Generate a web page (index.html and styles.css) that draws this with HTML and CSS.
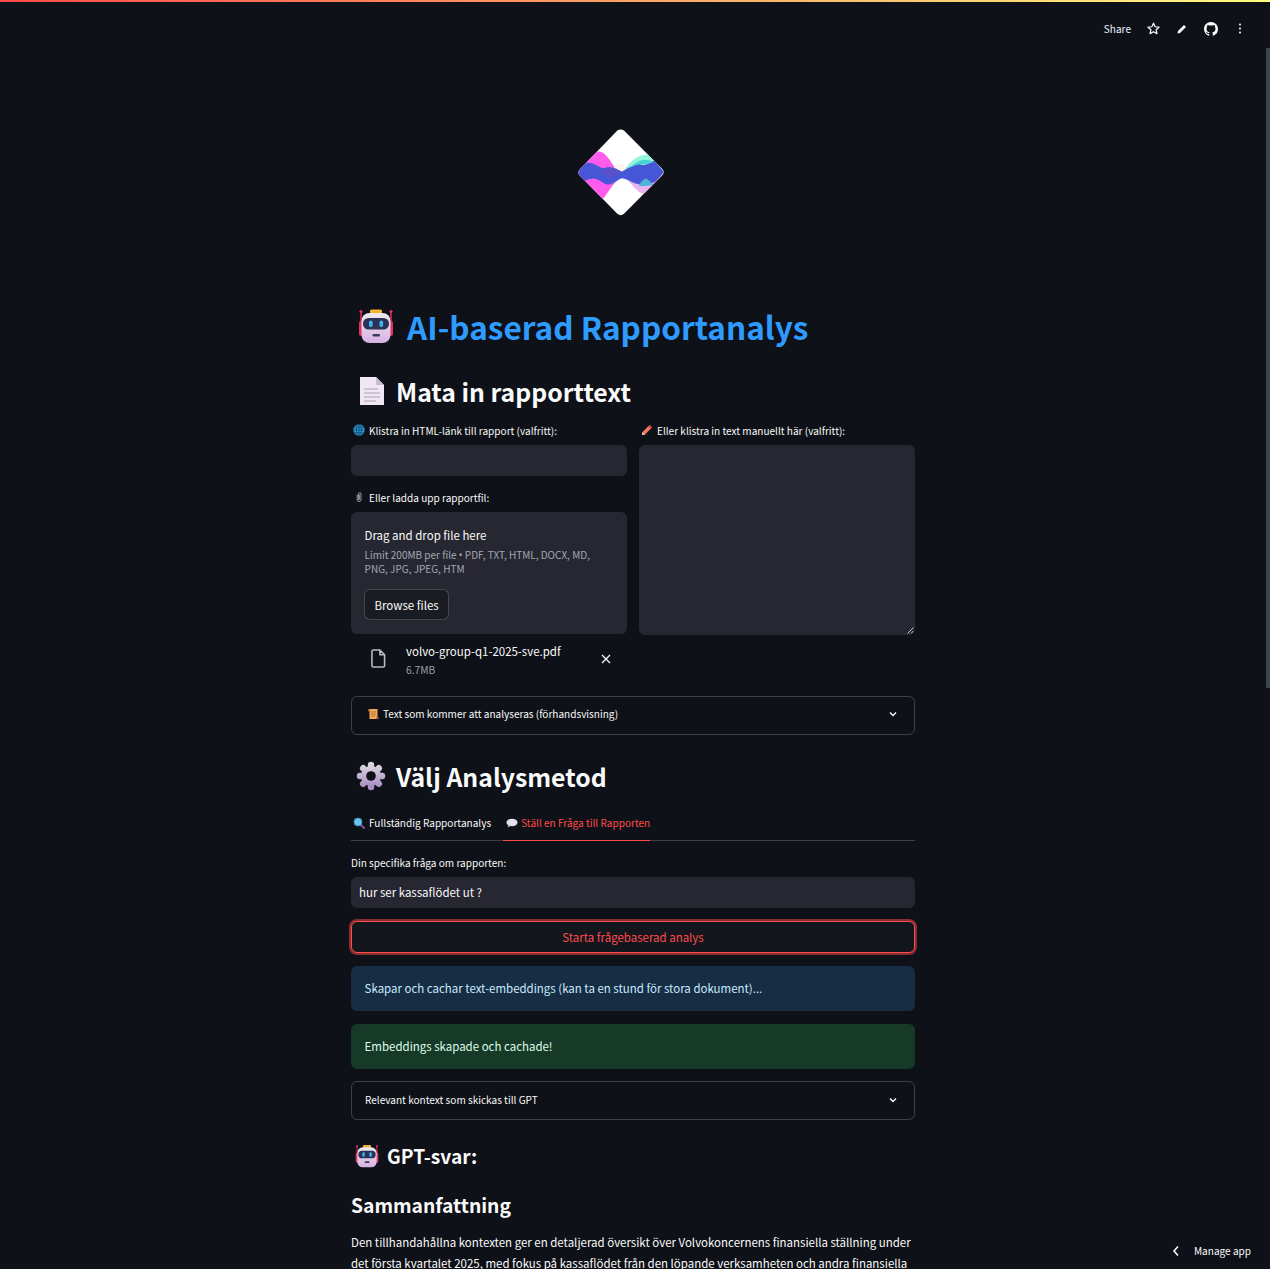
FILE: index.html
```html
<!DOCTYPE html>
<html lang="sv">
<head>
<meta charset="utf-8">
<title>AI-baserad Rapportanalys</title>
<link rel="stylesheet" href="styles.css">
</head>
<body>
<svg class="defs" width="0" height="0" aria-hidden="true">
  <defs>
    <linearGradient id="botFace" x1="0" y1="0" x2="0" y2="1"><stop offset="0" stop-color="#f0ebee"/><stop offset="1" stop-color="#d6b0e4"/></linearGradient>
    <linearGradient id="gearFill" x1="0" y1="0" x2="0" y2="1"><stop offset="0" stop-color="#d9d3dd"/><stop offset="1" stop-color="#a98fc4"/></linearGradient>
    <symbol id="i-robot" viewBox="0 0 36 36">
      <path d="M3 5v16M33 5v16" stroke="#e0325f" stroke-width="1.4"/>
      <circle cx="3" cy="3.500" r="1.600" fill="#f0306a"/><circle cx="33" cy="3.500" r="1.600" fill="#f0306a"/>
      <rect x="1" y="13" width="4" height="15" rx="2" fill="#e0325f"/><rect x="31" y="13" width="4" height="15" rx="2" fill="#e0325f"/>
      <rect x="12" y="1.500" width="12" height="4" rx="1.500" fill="#f2b632"/>
      <rect x="3.500" y="5" width="29" height="30" rx="8" fill="url(#botFace)"/>
      <rect x="5" y="10" width="26" height="11.500" rx="5.500" fill="#2c3357"/>
      <rect x="11" y="12.500" width="3.600" height="6.500" rx="1.800" fill="#3fb6f2"/><rect x="21.500" y="12.500" width="3.600" height="6.500" rx="1.800" fill="#3fb6f2"/>
      <rect x="14.500" y="26" width="7.500" height="2.400" rx="1.200" fill="#3c3a55"/>
    </symbol>
    <symbol id="i-doc" viewBox="0 0 26 30">
      <path d="M1 1h16l8 8v20H1z" fill="#efe7f3"/>
      <path d="M17 1l8 8h-8z" fill="#c8bdd0"/>
      <path d="M5 13h14M5 17h16M5 21h16M5 25h12" stroke="#a9a4b0" stroke-width="1"/>
    </symbol>
    <symbol id="i-globe" viewBox="0 0 12 12">
      <circle cx="6" cy="6" r="5.700" fill="#2f9bd6"/>
      <g fill="none" stroke="#0f3f66" stroke-width=".7"><ellipse cx="6" cy="6" rx="2.600" ry="5.500"/><path d="M.5 6h11M1.300 3.300h9.400M1.300 8.700h9.400M6 .5v11"/></g>
    </symbol>
    <symbol id="i-clip" viewBox="0 0 10 12">
      <path d="M3.200 3.500v5.200a1.900 1.900 0 0 0 3.800 0V2.900a1.300 1.300 0 0 0-2.600 0v5.400a.6.600 0 0 0 1.200 0V3.600" fill="none" stroke="#a6a6ac" stroke-width=".9"/>
    </symbol>
    <symbol id="i-pencil" viewBox="0 0 12 12">
      <path d="M8.500 1l2.500 2.500-7 7L1 11l.5-3z" fill="#f0795a"/>
      <path d="M8.500 1l2.500 2.500-1.200 1.200-2.500-2.500z" fill="#e8384f"/>
      <path d="M1.500 8L1 11l3-.5z" fill="#f5d4b0"/>
    </symbol>
    <symbol id="i-scroll" viewBox="0 0 12 12">
      <rect x="2.500" y="1" width="8" height="10" fill="#f2a65a"/>
      <path d="M1 1.200h2v2H1zM9 9h2.500v2H9z" fill="#b9702f"/>
      <path d="M4 4h5M4 6h5M4 8h4" stroke="#a85f25" stroke-width=".7"/>
    </symbol>
    <symbol id="i-gear" viewBox="0 0 30 30">
      <path d="M15 4v22M4 15h22M7.200 7.200l15.600 15.600M22.800 7.200L7.200 22.800" stroke="url(#gearFill)" stroke-width="6.500" stroke-linecap="round"/>
      <circle cx="15" cy="15" r="10" fill="url(#gearFill)"/>
      <circle cx="15" cy="15" r="4.800" fill="#0e1117"/>
    </symbol>
    <symbol id="i-search" viewBox="0 0 12 12">
      <path d="M7.500 7.500l3.500 3.500" stroke="#7b4fa5" stroke-width="2" stroke-linecap="round"/>
      <circle cx="5" cy="5" r="4" fill="#6cc4ee" stroke="#3f8fc4" stroke-width=".8"/>
    </symbol>
    <symbol id="i-speech" viewBox="0 0 12 12">
      <ellipse cx="6" cy="5.500" rx="5.500" ry="3.800" fill="#e6dfec"/>
      <path d="M2.500 7.500L1.500 10.500 5 8.800z" fill="#cdbfd8"/>
    </symbol>
    <symbol id="i-chev" viewBox="0 0 12 12">
      <path d="M3 4.500L6 7.500 9 4.500" fill="none" stroke="#fafafa" stroke-width="1.400"/>
    </symbol>
  </defs>
</svg>

<div class="page">
  <div class="topbar"></div>

  <header class="toolbar">
    <span class="share">Share</span>
    <svg class="tool tool-star" viewBox="0 0 24 24"><path d="M12 3.500l2.600 5.700 6.200.7-4.600 4.200 1.300 6.100L12 17.200l-5.500 3 1.300-6.100-4.600-4.200 6.200-.7z" fill="none" stroke="#fafafa" stroke-width="2" stroke-linejoin="round"/></svg>
    <svg class="tool tool-pen" viewBox="0 0 24 24"><path d="M3 21l1-5L16 4l4 4L8 20z" fill="#fafafa"/></svg>
    <svg class="tool tool-gh" viewBox="0 0 16 16"><path d="M8 0C3.580 0 0 3.580 0 8c0 3.540 2.290 6.530 5.470 7.590.4.070.55-.17.55-.38 0-.19-.01-.82-.01-1.490-2.010.37-2.530-.49-2.690-.94-.09-.23-.48-.94-.82-1.130-.28-.15-.68-.52-.01-.53.630-.01 1.080.58 1.230.82.720 1.210 1.870.87 2.330.66.070-.52.280-.87.510-1.070-1.780-.2-3.640-.89-3.640-3.950 0-.87.310-1.590.82-2.150-.08-.2-.36-1.020.08-2.120 0 0 .67-.21 2.200.82.640-.18 1.320-.27 2-.27s1.360.09 2 .27c1.530-1.040 2.200-.82 2.200-.82.440 1.100.16 1.920.08 2.120.51.560.82 1.270.82 2.150 0 3.070-1.870 3.750-3.650 3.950.29.250.54.730.54 1.480 0 1.070-.01 1.930-.01 2.200 0 .21.150.46.550.38A8.010 8.010 0 0 0 16 8c0-4.420-3.580-8-8-8z" fill="#fafafa"/></svg>
    <svg class="tool tool-more" viewBox="0 0 4 14"><circle cx="2" cy="2" r="1.300" fill="#fafafa"/><circle cx="2" cy="7" r="1.300" fill="#fafafa"/><circle cx="2" cy="12" r="1.300" fill="#fafafa"/></svg>
  </header>

  <main class="main">
    <div class="logo-wrap">
      <svg class="logo" viewBox="114 88 258 260" role="img" aria-label="Logotyp">
        <defs>
          <clipPath id="dia"><path d="M232 92q10-6 20 0L366 207q10 10 0 20L252 342q-10 8-20 0L120 228q-10-10 0-20z"/></clipPath>
        </defs>
        <path d="M232 92q10-6 20 0L366 207q10 10 0 20L252 342q-10 8-20 0L120 228q-10-10 0-20z" fill="#fff"/>
        <g clip-path="url(#dia)">
          <path d="M100 205C130 180 150 155 175 155C205 155 215 205 245 218L245 232C225 240 210 270 190 296C160 285 130 255 100 235z" fill="#ff5cee"/>
          <path d="M250 212C275 180 295 165 320 165C340 170 360 195 380 215L300 225z" fill="#93f5dc"/>
          <path d="M262 240C285 265 300 285 315 282C335 270 350 250 372 225L300 225z" fill="#e9b4ee"/>
          <path d="M222 200a22 22 0 0 1 36 3l-10 20-22 0z" fill="#fdf3ee"/>
          <path d="M114 217L135 190C165 184 180 210 195 204C215 197 230 208 245 215C265 208 280 191 300 193C320 203 335 181 345 183L372 217L345 247C325 252 310 256 290 252C275 248 258 235 245 235C225 244 215 256 200 254C185 249 175 236 160 236C140 239 130 244 125 249z" fill="#4656d6"/>
          <path d="M295 258C305 245 312 235 320 237C328 242 335 250 340 254C325 258 310 260 295 258z" fill="#4bb5da"/>
          <path d="M268 206C280 194 295 182 312 180C325 180 335 184 340 188C325 190 315 195 300 194C288 194 278 200 268 206z" fill="#47d3d5"/>
          <path d="M178 218C192 213 200 203 215 205C225 207 235 213 245 218C232 222 225 232 212 236C202 228 190 222 178 218z" fill="#5a50c8"/>
        </g>
      </svg>
    </div>

    <h1 class="title"><svg class="emoji-title"><use href="#i-robot"/></svg><span>AI-baserad Rapportanalys</span></h1>

    <h2 class="heading heading-input"><svg class="emoji-doc"><use href="#i-doc"/></svg><span>Mata in rapporttext</span></h2>

    <section class="columns">
      <div class="col">
        <label class="label"><svg class="emoji"><use href="#i-globe"/></svg>Klistra in HTML-länk till rapport (valfritt):</label>
        <div class="input"></div>
        <label class="label label-upload"><svg class="emoji"><use href="#i-clip"/></svg>Eller ladda upp rapportfil:</label>
        <div class="dropzone">
          <div class="drop-title">Drag and drop file here</div>
          <div class="drop-hint">Limit 200MB per file <span class="bullet">•</span> PDF, TXT, HTML, DOCX, MD, PNG, JPG, JPEG, HTM</div>
          <button class="browse" type="button">Browse files</button>
        </div>
        <div class="file">
          <svg class="file-icon" viewBox="0 0 16 20"><path d="M2.500 1h7l5 5v11.500a1.500 1.500 0 0 1-1.500 1.500H2.500A1.500 1.500 0 0 1 1 17.500v-15A1.500 1.500 0 0 1 2.500 1zM9.500 1v5h5" fill="none" stroke="#b9bac1" stroke-width="1.700" stroke-linejoin="round"/></svg>
          <div class="file-meta">
            <div class="file-name">volvo-group-q1-2025-sve.pdf</div>
            <div class="file-size">6.7MB</div>
          </div>
          <svg class="file-x" viewBox="0 0 10 10"><path d="M1 1l8 8M9 1L1 9" stroke="#fafafa" stroke-width="1.300"/></svg>
        </div>
      </div>
      <div class="col">
        <label class="label"><svg class="emoji"><use href="#i-pencil"/></svg>Eller klistra in text manuellt här (valfritt):</label>
        <div class="textarea">
          <svg class="grip" viewBox="0 0 8 8"><path d="M7.500 1.500l-6 6M7.500 5l-2.500 2.500" stroke="#c9c9cf" stroke-width="1"/></svg>
        </div>
      </div>
    </section>

    <div class="expander expander-preview">
      <span class="exp-label"><svg class="emoji"><use href="#i-scroll"/></svg>Text som kommer att analyseras (förhandsvisning)</span>
      <svg class="chev"><use href="#i-chev"/></svg>
    </div>

    <h2 class="heading heading-method"><svg class="emoji-gear"><use href="#i-gear"/></svg><span>Välj Analysmetod</span></h2>

    <nav class="tabs">
      <span class="tab"><svg class="emoji"><use href="#i-search"/></svg>Fullständig Rapportanalys</span>
      <span class="tab tab-active"><svg class="emoji"><use href="#i-speech"/></svg>Ställ en Fråga till Rapporten</span>
    </nav>

    <label class="label label-q">Din specifika fråga om rapporten:</label>
    <div class="input input-q">hur ser kassaflödet ut ?</div>
    <button class="primary" type="button">Starta frågebaserad analys</button>
    <div class="alert alert-info">Skapar och cachar text-embeddings (kan ta en stund för stora dokument)...</div>
    <div class="alert alert-ok">Embeddings skapade och cachade!</div>
    <div class="expander expander-ctx">
      <span class="exp-label">Relevant kontext som skickas till GPT</span>
      <svg class="chev"><use href="#i-chev"/></svg>
    </div>

    <h3 class="answer-head"><svg class="emoji-bot-s"><use href="#i-robot"/></svg><span>GPT-svar:</span></h3>
    <h3 class="answer-sub">Sammanfattning</h3>
    <p class="para">Den tillhandahållna kontexten ger en detaljerad översikt över Volvokoncernens finansiella ställning under det första kvartalet 2025, med fokus på kassaflödet från den löpande verksamheten och andra finansiella</p>
  </main>

  <div class="manage">
    <svg class="manage-chev" viewBox="0 0 8 12"><path d="M6 1.500L2 6l4 4.500" fill="none" stroke="#fafafa" stroke-width="1.600"/></svg>
    <span>Manage app</span>
  </div>
  <div class="scrollthumb"></div>
</div>
</body>
</html>
```

FILE: styles.css
```css
* { box-sizing: border-box; }
html, body { margin: 0; padding: 0; height: 100%; overflow: hidden; background: #0e1117; }
body { font-family: "Noto Sans CJK SC", "Noto Sans", sans-serif; color: #fafafa; font-size: 11.48px; }
.defs { position: absolute; }

.page { position: relative; height: 1269px; overflow: hidden; }
.topbar { height: 2px; background: linear-gradient(90deg, #ff4b4b, #fffd80); }

.toolbar { height: 46px; display: flex; align-items: center; justify-content: flex-end; padding: 7px 28px 0 0; }
.share { font-size: 10.1px; margin-right: 15px; color: #e8f4ff; }
.tool { display: block; flex: none; }
.tool-star { width: 15px; height: 15px; margin-right: 15px; }
.tool-pen { width: 12px; height: 12px; margin-right: 16px; }
.tool-gh { width: 14px; height: 14px; margin-right: 20px; }
.tool-more { width: 4px; height: 11px; }

.main { width: 564px; margin-left: 351px; display: flex; flex-direction: column; }

.logo-wrap { display: flex; justify-content: center; padding: 81px 24px 0 0; }
.logo { width: 86px; height: 87px; display: block; }

h1, h2, h3, p { margin: 0; }
.title { display: flex; align-items: center; margin-top: 90px; height: 40px; font-size: 31.55px; font-weight: 700; color: #2f9bff; white-space: nowrap; padding-left: 7px; }
.emoji-title { width: 36px; height: 36px; margin-right: 13px; flex: none; }

.heading { display: flex; align-items: center; font-size: 24.8px; font-weight: 600; white-space: nowrap; }
.heading-input { margin-top: 29px; height: 32px; padding-left: 8px; }
.emoji-doc { width: 26px; height: 30px; margin-right: 11px; flex: none; }
.heading-method { margin-top: 24px; height: 34px; padding-left: 5px; }
.emoji-gear { width: 30px; height: 30px; margin-right: 10px; flex: none; }

.columns { display: grid; grid-template-columns: 276px 276px; column-gap: 12px; margin-top: 16px; }
.col { display: flex; flex-direction: column; min-width: 0; }

.label { display: flex; align-items: center; height: 16px; padding-bottom: 2px; font-size: 10.05px; white-space: nowrap; }
.emoji { width: 12px; height: 12px; margin: 0 4px 0 2px; flex: none; }

.input { height: 31px; margin-top: 6px; background: #262730; border-radius: 6px; padding: 0 8px 1px; display: flex; align-items: center; font-size: 11.48px; }
.label-upload { margin-top: 14px; }
.dropzone { margin-top: 6px; height: 122px; background: #262730; border-radius: 6px; padding: 13px 13px 0 13.6px; display: flex; flex-direction: column; align-items: flex-start; }
.drop-title { font-size: 11.48px; line-height: 20px; }
.drop-hint { margin-top: 3px; font-size: 10px; line-height: 14px; color: #a3a8b4; }
.bullet { font-family: "Noto Sans", sans-serif; }
.browse { margin: 13px 0 0 -.6px; height: 31px; padding: 0 9.5px; background: #1a1c24; border: 1px solid rgba(250,250,250,.2); border-radius: 6px; color: #fafafa; font: inherit; font-size: 11.48px; }

.file { display: flex; align-items: flex-start; height: 50px; padding: 7px 0 0 20px; }
.file-icon { width: 15px; height: 19px; margin: 8px 20px 0 0; flex: none; }
.file-meta { width: 195px; flex: none; }
.file-name { font-size: 11.48px; line-height: 20px; }
.file-size { font-size: 10.2px; line-height: 18px; color: #9b9ea6; }
.file-x { width: 10px; height: 10px; margin-top: 13px; flex: none; }

.textarea { position: relative; margin-top: 6px; height: 190px; background: #262730; border-radius: 6px; }
.grip { position: absolute; right: 1px; bottom: 1px; width: 8px; height: 8px; }

.expander { display: flex; align-items: center; justify-content: space-between; height: 39px; border: 1px solid rgba(250,250,250,.2); border-radius: 6px; padding: 0 15px 2px 13px; }
.expander-preview { margin-top: 12px; padding-bottom: 4px; }
.expander-ctx { margin-top: 12px; }
.exp-label { display: flex; align-items: center; font-size: 10.05px; white-space: nowrap; }
.chev { width: 12px; height: 12px; flex: none; }

.tabs { display: flex; margin-top: 13px; height: 35px; border-bottom: 1px solid rgba(250,250,250,.2); gap: 12px; padding-top: 6px; }
.tab { display: flex; align-items: flex-start; padding-top: 3px; font-size: 10.05px; white-space: nowrap; height: 29px; }
.tab .emoji { margin-top: 2px; }
.tab-active { color: #ff4b4b; border-bottom: 1px solid #ff4b4b; height: 29px; }
.tab-active .emoji { margin: 2px 3px 0 3px; }

.label-q { margin-top: 14px; }
.input-q { margin-top: 6px; }

.primary { margin-top: 13px; height: 32px; width: 100%; background: #13161d; border: 1px solid #ff4b4b; border-radius: 6px; box-shadow: 0 0 0 2px rgba(255,75,75,.5); color: #ff4b4b; font: inherit; font-size: 11.48px; }

.alert { height: 45px; border-radius: 6px; padding: 0 13.6px 1px; display: flex; align-items: center; font-size: 11.48px; margin-top: 13px; }
.alert-info { background: #172d43; color: #c7ebff; }
.alert-ok { background: #173928; color: #dffde9; }

.answer-head { display: flex; align-items: center; margin-top: 22px; height: 27px; font-size: 19.2px; font-weight: 600; padding-left: 4px; }
.emoji-bot-s { width: 24px; height: 24px; margin-right: 8px; flex: none; }
.answer-sub { margin-top: 22px; font-size: 19.3px; font-weight: 600; line-height: 28px; }
.para { margin-top: 13px; font-size: 11.48px; line-height: 20.5px; }

.manage { position: absolute; right: 19px; bottom: 11px; display: flex; align-items: center; font-size: 10.05px; }
.manage-chev { width: 8px; height: 12px; margin-right: 14px; }
.scrollthumb { position: absolute; right: 0; top: 48px; width: 4px; height: 640px; background: #3f444b; }
```
